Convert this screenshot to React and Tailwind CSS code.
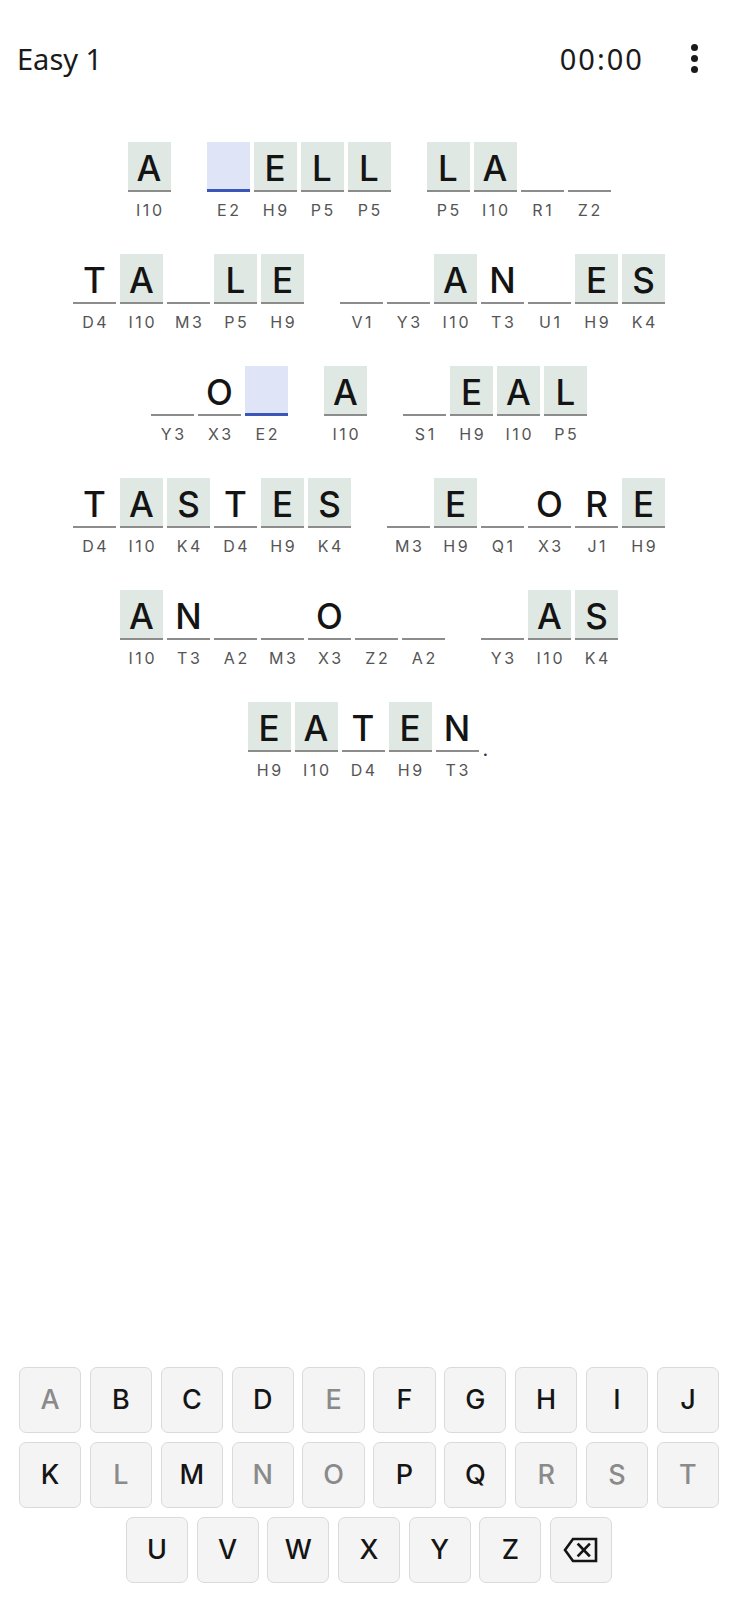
import React from 'react';

// g = given (shaded), f = filled, e = empty, s = selected, sp = word space, p = punctuation
const rows = [
  [['A', 'I10', 'g'], ['sp'], ['', 'E2', 's'], ['E', 'H9', 'g'], ['L', 'P5', 'g'], ['L', 'P5', 'g'], ['sp'], ['L', 'P5', 'g'], ['A', 'I10', 'g'], ['', 'R1', 'e'], ['', 'Z2', 'e']],
  [['T', 'D4', 'f'], ['A', 'I10', 'g'], ['', 'M3', 'e'], ['L', 'P5', 'g'], ['E', 'H9', 'g'], ['sp'], ['', 'V1', 'e'], ['', 'Y3', 'e'], ['A', 'I10', 'g'], ['N', 'T3', 'f'], ['', 'U1', 'e'], ['E', 'H9', 'g'], ['S', 'K4', 'g']],
  [['', 'Y3', 'e'], ['O', 'X3', 'f'], ['', 'E2', 's'], ['sp'], ['A', 'I10', 'g'], ['sp'], ['', 'S1', 'e'], ['E', 'H9', 'g'], ['A', 'I10', 'g'], ['L', 'P5', 'g']],
  [['T', 'D4', 'f'], ['A', 'I10', 'g'], ['S', 'K4', 'g'], ['T', 'D4', 'f'], ['E', 'H9', 'g'], ['S', 'K4', 'g'], ['sp'], ['', 'M3', 'e'], ['E', 'H9', 'g'], ['', 'Q1', 'e'], ['O', 'X3', 'f'], ['R', 'J1', 'f'], ['E', 'H9', 'g']],
  [['A', 'I10', 'g'], ['N', 'T3', 'f'], ['', 'A2', 'e'], ['', 'M3', 'e'], ['O', 'X3', 'f'], ['', 'Z2', 'e'], ['', 'A2', 'e'], ['sp'], ['', 'Y3', 'e'], ['A', 'I10', 'g'], ['S', 'K4', 'g']],
  [['E', 'H9', 'g'], ['A', 'I10', 'g'], ['T', 'D4', 'f'], ['E', 'H9', 'g'], ['N', 'T3', 'f'], ['p']],
];

const dimmed = ['A', 'E', 'L', 'N', 'O', 'R', 'S', 'T'];
const keyRow1 = 'ABCDEFGHIJ'.split('');
const keyRow2 = 'KLMNOPQRST'.split('');
const keyRow3 = 'UVWXYZ'.split('');

const Cell = ({ letter, label, type }) => {
  const box =
    type === 's'
      ? 'bg-[#dfe4f6] border-b-[3px] border-[#3a56b8]'
      : type === 'g'
      ? 'bg-[#dfe8e2] border-b-2 border-[#8c8c8c]'
      : 'border-b-2 border-[#8c8c8c]';
  return (
    <div className="w-[43px] flex flex-col items-center">
      <div className={`w-[43px] h-[50px] flex items-center justify-center pt-[5px] ${box}`}>
        <span className="text-[35px] leading-none font-medium text-[#141414]">{letter}</span>
      </div>
      <div className="mt-[9px] pl-[0.16em] text-[16px] leading-[18px] tracking-[0.16em] text-[#555]">{label}</div>
    </div>
  );
};

const Key = ({ ch }) => (
  <button
    className={`h-[66px] w-full rounded-[7px] border-[1.5px] border-[#dadada] bg-[#f4f4f4] flex items-center justify-center text-[27px] font-medium ${
      dimmed.includes(ch) ? 'text-[#8a8a8a]' : 'text-[#151515]'
    }`}
  >
    {ch}
  </button>
);

export default function App() {
  return (
    <div className="h-[1600px] flex flex-col bg-white" style={{ fontFamily: 'Inter, "Noto Sans", sans-serif' }}>
      <header className="h-[116px] flex items-center pl-[17px] pr-[40px] text-[#1a1a1a]" style={{ fontFamily: '"Noto Sans", "Open Sans", sans-serif' }}>
        <div className="text-[29px] leading-none">Easy 1</div>
        <div className="ml-auto text-[29px] leading-none tracking-[0.07em]">00:00</div>
        <div className="ml-[46px] w-[8px] flex flex-col items-center gap-[4px]">
          <span className="w-[7px] h-[7px] rounded-full bg-[#1a1a1a]" />
          <span className="w-[7px] h-[7px] rounded-full bg-[#1a1a1a]" />
          <span className="w-[7px] h-[7px] rounded-full bg-[#1a1a1a]" />
        </div>
      </header>

      <main className="pt-[26px] flex flex-col gap-[35px]">
        {rows.map((row, i) => (
          <div key={i} className="flex justify-center gap-[4px]">
            {row.map((c, j) => {
              if (c[0] === 'sp') return <div key={j} className="w-[28px]" />;
              if (c[0] === 'p')
                return (
                  <div key={j} className="w-[8px] h-[50px] flex items-end">
                    <span className="text-[20px] leading-[12px] translate-y-[3px] text-[#333]">.</span>
                  </div>
                );
              return <Cell key={j} letter={c[0]} label={c[1]} type={c[2]} />;
            })}
          </div>
        ))}
      </main>

      <div className="mt-auto px-[19px] pb-[17px] flex flex-col gap-[9px]">
        <div className="grid grid-cols-10 gap-x-[8.7px]">
          {keyRow1.map((k) => <Key key={k} ch={k} />)}
        </div>
        <div className="grid grid-cols-10 gap-x-[8.7px]">
          {keyRow2.map((k) => <Key key={k} ch={k} />)}
        </div>
        <div className="flex justify-center gap-[8.7px]">
          {keyRow3.map((k) => (
            <div key={k} className="w-[62px]">
              <Key ch={k} />
            </div>
          ))}
          <button className="w-[62px] h-[66px] rounded-[7px] border-[1.5px] border-[#dadada] bg-[#f4f4f4] flex items-center justify-center">
            <svg width="36" height="28" viewBox="0 0 36 28" fill="none" stroke="#151515" strokeWidth="2.6" strokeLinejoin="miter">
              <path d="M10 3 H33 V25 H10 L2 14 Z" />
              <path d="M15.5 8.5 L26 19.5 M26 8.5 L15.5 19.5" strokeLinecap="square" />
            </svg>
          </button>
        </div>
      </div>
    </div>
  );
}
